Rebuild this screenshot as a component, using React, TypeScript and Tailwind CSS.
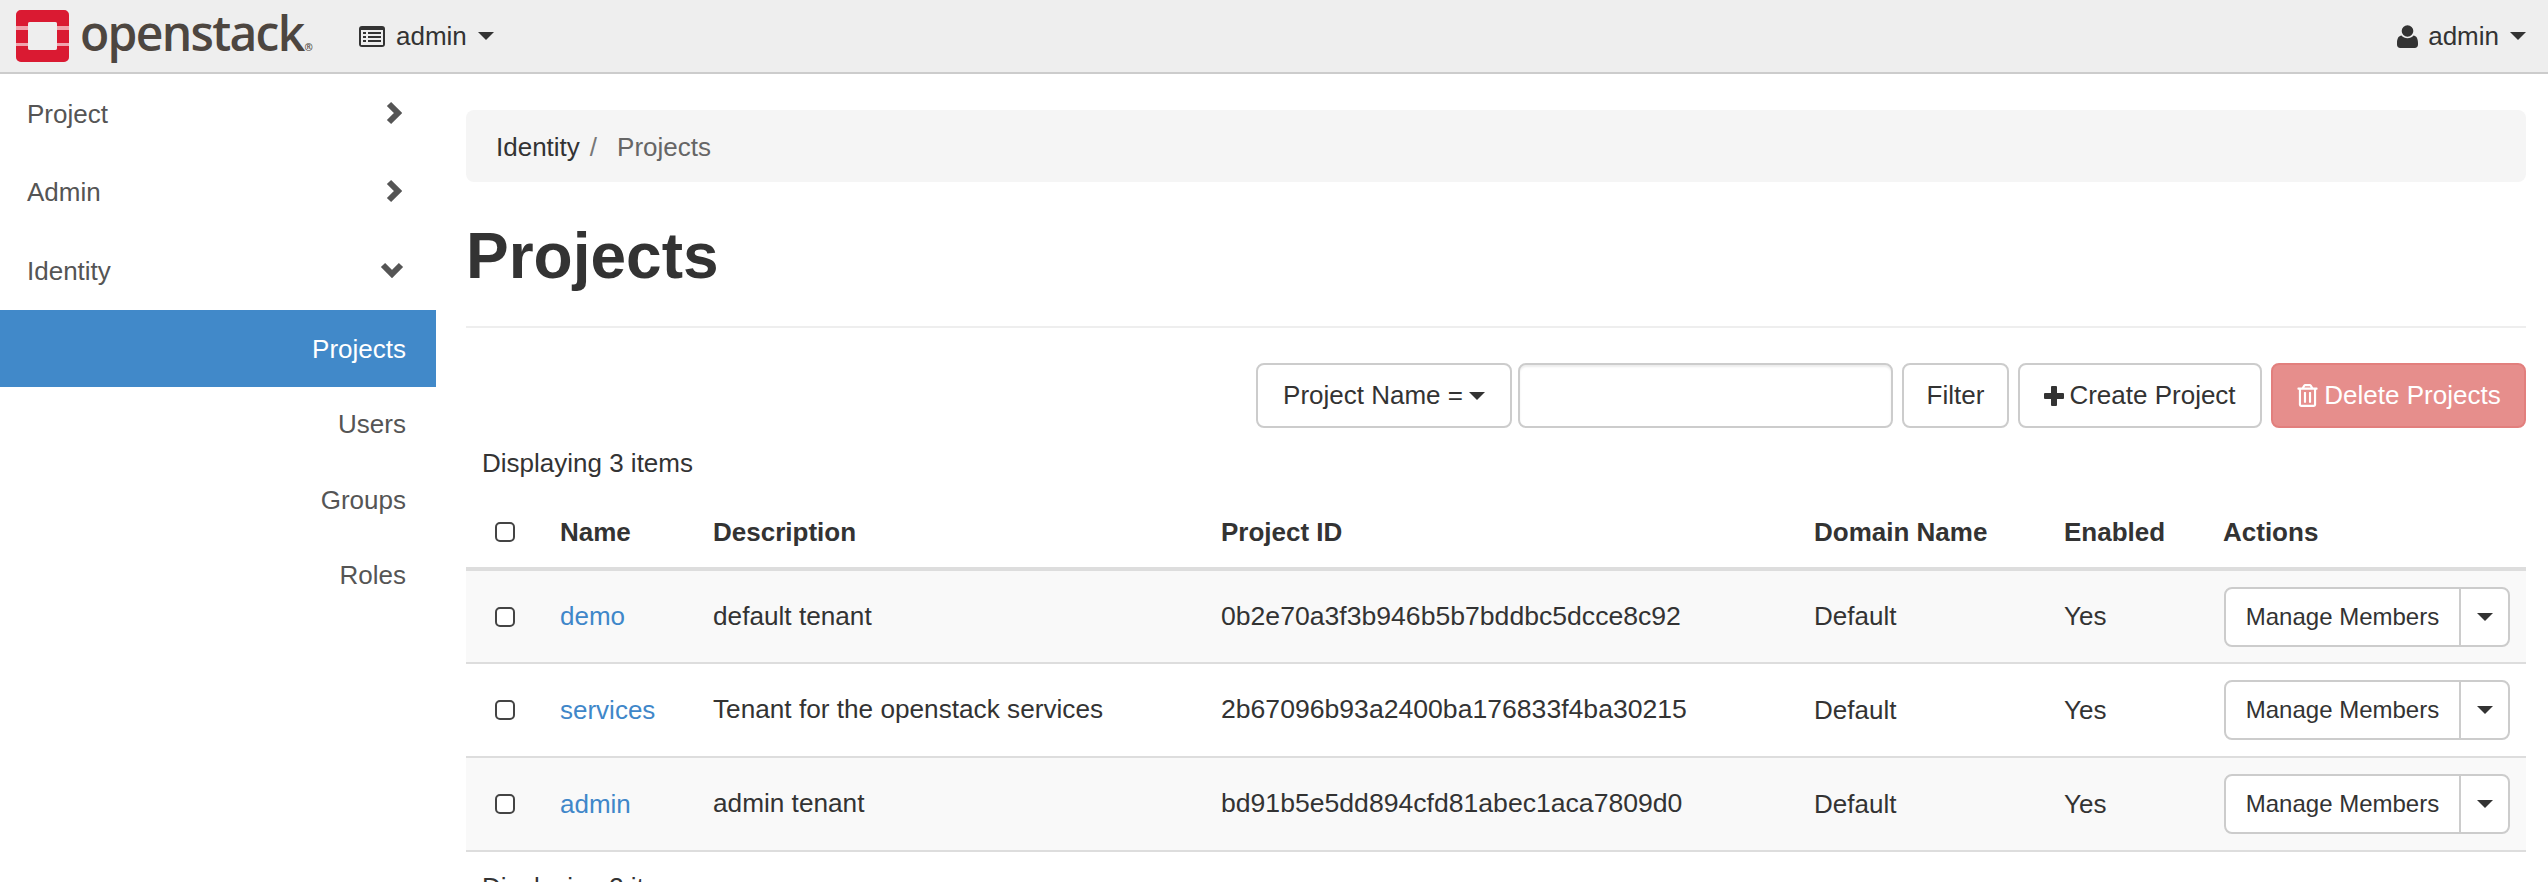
import React from 'react'
import { FaRegTrashAlt } from 'react-icons/fa'

const projects = [
  { name: 'demo', description: 'default tenant', id: '0b2e70a3f3b946b5b7bddbc5dcce8c92' },
  { name: 'services', description: 'Tenant for the openstack services', id: '2b67096b93a2400ba176833f4ba30215' },
  { name: 'admin', description: 'admin tenant', id: 'bd91b5e5dd894cfd81abec1aca7809d0' },
]

function Caret({ className = '' }: { className?: string }) {
  return <span className={`inline-block w-0 h-0 border-x-[8px] border-x-transparent border-t-[8px] border-t-[#333] ${className}`} />
}

function Logo() {
  return (
    <svg width="53" height="52" viewBox="0 0 53 52" className="shrink-0">
      <rect width="53" height="52" rx="5" fill="#f0a3ad" />
      <path
        fill="#da1a32"
        d="M5 0h43a5 5 0 0 1 5 5v11H41v-2a2 2 0 0 0-2-2H14a2 2 0 0 0-2 2v2H0V5a5 5 0 0 1 5-5z"
      />
      <rect x="0" y="20" width="12" height="13" fill="#da1a32" />
      <rect x="41" y="20" width="12" height="13" fill="#da1a32" />
      <path
        fill="#da1a32"
        d="M0 36h12v2a2 2 0 0 0 2 2h25a2 2 0 0 0 2-2v-2h12v11a5 5 0 0 1-5 5H5a5 5 0 0 1-5-5z"
      />
      <rect x="12" y="12" width="29" height="28" rx="2" fill="#eeeeee" />
    </svg>
  )
}

function ListIcon() {
  return (
    <svg width="26" height="21" viewBox="0 0 26 21" className="shrink-0">
      <rect width="26" height="21" rx="3" fill="#333" />
      <rect x="2" y="4" width="22" height="15" fill="#eeeeee" />
      <g fill="#333">
        <rect x="4" y="6" width="3" height="2" />
        <rect x="4" y="10" width="3" height="2" />
        <rect x="4" y="14" width="3" height="2" />
        <rect x="9" y="6" width="13" height="2" />
        <rect x="9" y="10" width="13" height="2" />
        <rect x="9" y="14" width="13" height="2" />
      </g>
    </svg>
  )
}

function UserIcon() {
  return (
    <svg width="21" height="23" viewBox="0 0 21 23" fill="#333" className="shrink-0">
      <circle cx="10.500" cy="6" r="5.800" />
      <path d="M4.500 10.500c1.500 1.800 3.600 2.700 6 2.700s4.500-.9 6-2.700c2.800.3 4.500 2.800 4.500 7.500v1.500c0 2-1.300 3.500-3.300 3.500H3.300C1.300 23 0 21.500 0 19.500V18c0-4.700 1.700-7.200 4.500-7.500z" />
    </svg>
  )
}

function ChevronRight() {
  return (
    <svg width="16" height="24" viewBox="0 0 16 24" className="shrink-0">
      <path d="M3 3l9 9-9 9" fill="none" stroke="#555" strokeWidth="6" strokeLinejoin="miter" />
    </svg>
  )
}

function ChevronDown() {
  return (
    <svg width="24" height="16" viewBox="0 0 24 16" className="shrink-0">
      <path d="M3 3l9 9 9-9" fill="none" stroke="#555" strokeWidth="6" strokeLinejoin="miter" />
    </svg>
  )
}

function PlusIcon() {
  return (
    <svg width="20" height="20" viewBox="0 0 20 20" fill="#333" className="shrink-0">
      <rect x="7" y="0" width="6" height="20" rx="1" />
      <rect x="0" y="7" width="20" height="6" rx="1" />
    </svg>
  )
}

function Checkbox() {
  return <input type="checkbox" className="appearance-none block w-[20px] h-[20px] border-2 border-[#444] rounded-[5px] bg-white" />
}

function SideItem({ label, open }: { label: string; open?: boolean }) {
  return (
    <div className={`flex items-center justify-between pl-[27px] ${open ? 'h-[80px] pr-[32px]' : 'h-[78px] pr-[34px]'}`}>
      <span className="pt-[2px]">{label}</span>
      {open ? <ChevronDown /> : <ChevronRight />}
    </div>
  )
}

function SubItem({ label, active }: { label: string; active?: boolean }) {
  return (
    <div className={`flex items-center justify-end pr-[30px] ${active ? 'h-[77px] pt-[2px] bg-[#4189c9] text-white' : 'h-[75.500px]'}`}>
      {label}
    </div>
  )
}

export default function App() {
  return (
    <div className="h-[882px] overflow-hidden bg-white text-[26px] text-[#333] font-['Liberation_Sans',Arial,sans-serif]">
      <header className="h-[74px] bg-[#eeeeee] border-b-2 border-[#cccccc] flex items-center justify-between pl-[16px] pr-[22px]">
        <div className="flex items-center">
          <Logo />
          <div className="ml-[11px] w-[279px] flex items-baseline text-[#4d4640] font-['Open_Sans',sans-serif] font-semibold text-[48px] leading-none tracking-[-1.7px] pb-[6px]">
            openstack<span className="text-[10px] tracking-normal ml-[1px]">®</span>
          </div>
          <div className="flex items-center">
            <ListIcon />
            <span className="ml-[11px]">admin</span>
            <Caret className="ml-[11px]" />
          </div>
        </div>
        <div className="flex items-center">
          <UserIcon />
          <span className="ml-[10px]">admin</span>
          <Caret className="ml-[11px]" />
        </div>
      </header>

      <div className="flex">
        <aside className="w-[436px] shrink-0 text-[#555]">
          <SideItem label="Project" />
          <SideItem label="Admin" />
          <SideItem label="Identity" open />
          <SubItem label="Projects" active />
          <SubItem label="Users" />
          <SubItem label="Groups" />
          <SubItem label="Roles" />
        </aside>

        <main className="flex-1 pl-[30px] pr-[22px] pt-[36px]">
          <div className="h-[72px] bg-[#f5f5f5] rounded-lg flex items-center px-[30px] pt-[2px]">
            <span>Identity</span>
            <span className="ml-[10px] text-[#777]">/</span>
            <span className="ml-[20px] text-[#666]">Projects</span>
          </div>

          <h1 className="mt-[34px] text-[64px] leading-[80px] font-bold">Projects</h1>
          <hr className="mt-[30px] border-t-2 border-[#eeeeee]" />

          <div className="mt-[35px] flex justify-end items-stretch h-[65px]">
            <button className="w-[256px] border-2 border-[#cccccc] rounded-lg bg-white flex items-center justify-center">
              Project Name =<Caret className="ml-[6px]" />
            </button>
            <input className="ml-[6px] w-[375px] border-2 border-[#cccccc] rounded-lg bg-white shadow-[inset_0_2px_2px_rgba(0,0,0,0.075)]" />
            <button className="ml-[9px] w-[107px] border-2 border-[#cccccc] rounded-lg bg-white">Filter</button>
            <button className="ml-[9px] w-[244px] border-2 border-[#cccccc] rounded-lg bg-white flex items-center justify-center">
              <PlusIcon />
              <span className="ml-[5px]">Create Project</span>
            </button>
            <button className="ml-[9px] w-[255px] border-2 border-[#e27f7d] rounded-lg bg-[#e68e8c] text-white flex items-center justify-center">
              <FaRegTrashAlt className="text-[23px] mr-[5px]" />
              Delete Projects
            </button>
          </div>

          <div className="mt-[20px] pl-[16px] leading-[30px]">Displaying 3 items</div>

          <table className="mt-[19px] w-full table-fixed border-collapse text-left">
            <thead>
              <tr className="h-[72px] border-b-4 border-[#dddddd]">
                <th className="w-[78px] pl-[29px] align-middle">
                  <Checkbox />
                </th>
                <th className="w-[153px] pl-[16px]">Name</th>
                <th className="w-[508px] pl-[16px]">Description</th>
                <th className="w-[593px] pl-[16px]">Project ID</th>
                <th className="w-[250px] pl-[16px]">Domain Name</th>
                <th className="w-[159px] pl-[16px]">Enabled</th>
                <th className="pl-[16px]">Actions</th>
              </tr>
            </thead>
            <tbody>
              {projects.map((p, i) => (
                <tr key={p.id} className={`h-[94px] border-b-2 border-[#dddddd] ${i % 2 === 0 ? 'bg-[#f9f9f9]' : 'bg-white'}`}>
                  <td className="pl-[29px]">
                    <Checkbox />
                  </td>
                  <td className="pl-[16px]">
                    <a href="#" className="text-[#3f87c9]">{p.name}</a>
                  </td>
                  <td className="pl-[16px] text-[26.200px]">{p.description}</td>
                  <td className="pl-[16px] text-[26.600px]">{p.id}</td>
                  <td className="pl-[16px]">Default</td>
                  <td className="pl-[16px]">Yes</td>
                  <td className="pl-[17px]">
                    <div className="flex w-[286px] h-[60px] border-2 border-[#cccccc] rounded-lg bg-white text-[24px]">
                      <button className="flex-1 border-r-2 border-[#cccccc]">Manage Members</button>
                      <button className="w-[47px] flex items-center justify-center"><Caret /></button>
                    </div>
                  </td>
                </tr>
              ))}
            </tbody>
          </table>

          <div className="mt-[20px] pl-[16px] leading-[30px]">Displaying 3 items</div>
        </main>
      </div>
    </div>
  )
}
